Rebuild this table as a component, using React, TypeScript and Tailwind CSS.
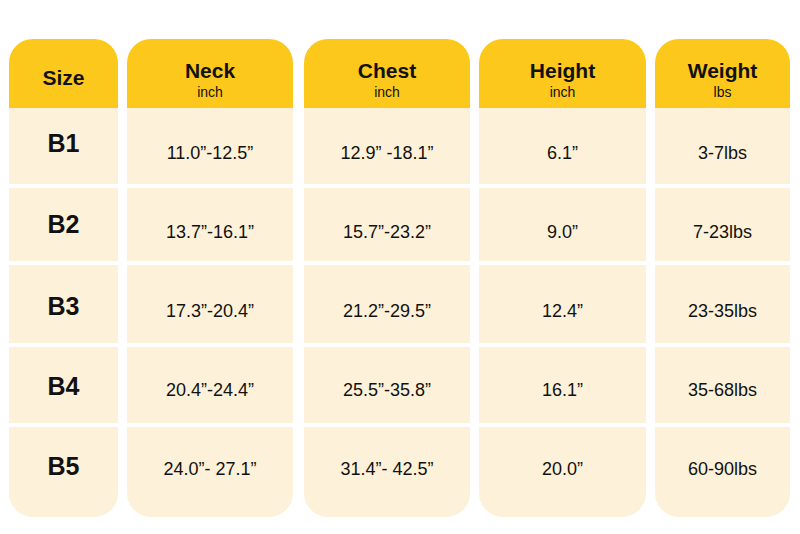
const font = { fontFamily: '"Liberation Sans", Arial, sans-serif' }

type Column = {
  title: string
  unit?: string
  width: string
  extra?: string
  values: string[]
}

const columns: Column[] = [
  { title: 'Size', width: 'w-[109px]', values: ['B1', 'B2', 'B3', 'B4', 'B5'] },
  {
    title: 'Neck',
    unit: 'inch',
    width: 'w-[166px]',
    values: ['11.0”-12.5”', '13.7”-16.1”', '17.3”-20.4”', '20.4”-24.4”', '24.0”- 27.1”'],
  },
  {
    title: 'Chest',
    unit: 'inch',
    width: 'w-[166px]',
    extra: 'ml-[2px]',
    values: ['12.9” -18.1”', '15.7”-23.2”', '21.2”-29.5”', '25.5”-35.8”', '31.4”- 42.5”'],
  },
  {
    title: 'Height',
    unit: 'inch',
    width: 'w-[167px]',
    values: ['6.1”', '9.0”', '12.4”', '16.1”', '20.0”'],
  },
  {
    title: 'Weight',
    unit: 'lbs',
    width: 'w-[135px]',
    values: ['3-7lbs', '7-23lbs', '23-35lbs', '35-68lbs', '60-90lbs'],
  },
]

// row heights and small text offsets measured from the chart
const rows = [
  { h: 'h-[76px]', size: 'pb-[5px]', value: 'pt-[13px]' },
  { h: 'h-[73px]', size: 'pt-0', value: 'pt-[14px]' },
  { h: 'h-[78px]', size: 'pt-[4px]', value: 'pt-[14px]' },
  { h: 'h-[76px]', size: 'pt-[2px]', value: 'pt-[10px]' },
  { h: 'h-[90px] rounded-b-[24px]', size: 'pb-[12px]', value: 'pb-[7px]' },
]

export default function App() {
  return (
    <div className="h-[534px] w-[800px] overflow-hidden bg-white pl-[9px] pt-[39px] text-[#111]" style={font}>
      <div className="flex gap-[9px]">
        {columns.map((col, ci) => (
          <div key={col.title} className={`flex flex-col gap-[4px] ${col.width} ${col.extra ?? ''}`}>
            <div className="-mb-[4px] flex h-[69px] flex-col items-center rounded-t-[24px] bg-[#fcc81c]">
              {col.unit ? (
                <>
                  <div className="mt-[21px] text-[21px] font-bold leading-none">{col.title}</div>
                  <div className="mt-[4px] text-[14px] leading-none">{col.unit}</div>
                </>
              ) : (
                <div className="mt-[28px] text-[21px] font-bold leading-none">{col.title}</div>
              )}
            </div>
            {col.values.map((v, ri) => (
              <div
                key={v + ri}
                className={`flex items-center justify-center bg-[#fdf1d9] leading-none ${rows[ri].h} ${
                  ci === 0 ? `text-[25px] font-bold ${rows[ri].size}` : `text-[18px] ${rows[ri].value}`
                }`}
              >
                {v}
              </div>
            ))}
          </div>
        ))}
      </div>
    </div>
  )
}
